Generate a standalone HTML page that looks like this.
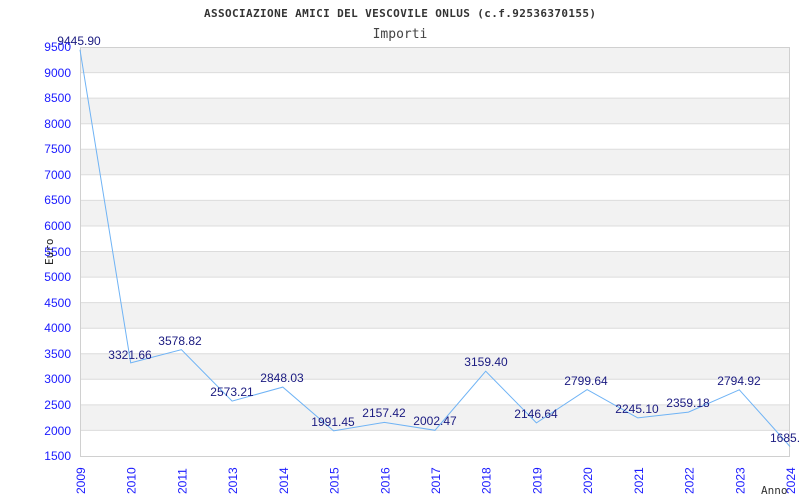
<!DOCTYPE html>
<html><head><meta charset="utf-8"><style>body{margin:0;background:#fff}svg{display:block}</style></head><body>
<svg width="800" height="500" xmlns="http://www.w3.org/2000/svg" font-family="Liberation Sans, sans-serif">
<rect width="800" height="500" fill="#fff"/>
<g fill="#f2f2f2">
<rect x="80" y="47" width="710" height="25.6"/>
<rect x="80" y="98.1" width="710" height="25.6"/>
<rect x="80" y="149.3" width="710" height="25.6"/>
<rect x="80" y="200.4" width="710" height="25.6"/>
<rect x="80" y="251.5" width="710" height="25.6"/>
<rect x="80" y="302.6" width="710" height="25.6"/>
<rect x="80" y="353.8" width="710" height="25.6"/>
<rect x="80" y="404.9" width="710" height="25.6"/>
</g>
<g stroke="#dcdcdc" stroke-width="1">
<line x1="80" y1="72.6" x2="790" y2="72.6"/><line x1="80" y1="98.1" x2="790" y2="98.1"/><line x1="80" y1="123.7" x2="790" y2="123.7"/><line x1="80" y1="149.3" x2="790" y2="149.3"/><line x1="80" y1="174.8" x2="790" y2="174.8"/><line x1="80" y1="200.4" x2="790" y2="200.4"/><line x1="80" y1="226" x2="790" y2="226"/><line x1="80" y1="251.5" x2="790" y2="251.5"/><line x1="80" y1="277.1" x2="790" y2="277.1"/><line x1="80" y1="302.6" x2="790" y2="302.6"/><line x1="80" y1="328.2" x2="790" y2="328.2"/><line x1="80" y1="353.8" x2="790" y2="353.8"/><line x1="80" y1="379.3" x2="790" y2="379.3"/><line x1="80" y1="404.9" x2="790" y2="404.9"/><line x1="80" y1="430.4" x2="790" y2="430.4"/>
</g>
<rect x="80.5" y="47.5" width="709" height="409" fill="none" stroke="#d0d0d0"/>
<polyline fill="none" stroke="#6fb3f5" stroke-width="1" points="80,49.8 130.7,362.9 181.4,349.7 232.1,401.1 282.8,387.1 333.6,430.9 384.3,422.4 435,430.3 485.7,371.2 536.4,422.9 587.1,389.6 637.8,417.9 688.5,412.1 739.3,389.8 790,446.5"/>
<g font-size="12" fill="#1a1a80" text-anchor="middle">
<text x="79" y="45">9445.90</text>
<text x="130" y="359">3321.66</text>
<text x="180" y="345">3578.82</text>
<text x="232" y="396">2573.21</text>
<text x="282" y="382">2848.03</text>
<text x="333" y="426">1991.45</text>
<text x="384" y="417">2157.42</text>
<text x="435" y="425">2002.47</text>
<text x="486" y="366">3159.40</text>
<text x="536" y="418">2146.64</text>
<text x="586" y="385">2799.64</text>
<text x="637" y="413">2245.10</text>
<text x="688" y="407">2359.18</text>
<text x="739" y="385">2794.92</text>
<text x="770" y="442" text-anchor="start">1685.2</text>
</g>
<g font-size="12" fill="#1a1aff" text-anchor="end">
<text x="71" y="51">9500</text><text x="71" y="77">9000</text><text x="71" y="102">8500</text><text x="71" y="128">8000</text><text x="71" y="153">7500</text><text x="71" y="179">7000</text><text x="71" y="204">6500</text><text x="71" y="230">6000</text><text x="71" y="256">5500</text><text x="71" y="281">5000</text><text x="71" y="307">4500</text><text x="71" y="332">4000</text><text x="71" y="358">3500</text><text x="71" y="383">3000</text><text x="71" y="409">2500</text><text x="71" y="435">2000</text><text x="71" y="460">1500</text>
</g>
<g font-size="12" fill="#1a1aff">
<text transform="translate(85,494) rotate(-90)">2009</text>
<text transform="translate(135.7,494) rotate(-90)">2010</text>
<text transform="translate(186.4,494) rotate(-90)">2011</text>
<text transform="translate(237.1,494) rotate(-90)">2013</text>
<text transform="translate(287.8,494) rotate(-90)">2014</text>
<text transform="translate(338.6,494) rotate(-90)">2015</text>
<text transform="translate(389.3,494) rotate(-90)">2016</text>
<text transform="translate(440,494) rotate(-90)">2017</text>
<text transform="translate(490.7,494) rotate(-90)">2018</text>
<text transform="translate(541.4,494) rotate(-90)">2019</text>
<text transform="translate(592.1,494) rotate(-90)">2020</text>
<text transform="translate(642.8,494) rotate(-90)">2021</text>
<text transform="translate(693.5,494) rotate(-90)">2022</text>
<text transform="translate(744.3,494) rotate(-90)">2023</text>
<text transform="translate(795,494) rotate(-90)">2024</text>
</g>
<text x="400" y="17" font-family="DejaVu Sans Mono, Liberation Mono, monospace" font-size="11" font-weight="bold" fill="#333" text-anchor="middle" textLength="392" lengthAdjust="spacing">ASSOCIAZIONE AMICI DEL VESCOVILE ONLUS (c.f.92536370155)</text>
<text x="400" y="38" font-family="DejaVu Sans Mono, Liberation Mono, monospace" font-size="13" fill="#444" text-anchor="middle">Importi</text>
<text transform="translate(53,265) rotate(-90)" font-family="DejaVu Sans Mono, Liberation Mono, monospace" font-size="11" fill="#222">Euro</text>
<text x="761" y="494" font-family="DejaVu Sans Mono, Liberation Mono, monospace" font-size="11" fill="#333">Anno</text>
</svg>
</body></html>
